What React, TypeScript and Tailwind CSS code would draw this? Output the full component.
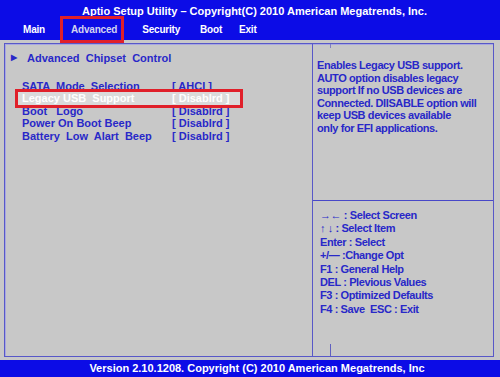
import React from 'react';

const FONT = { fontFamily: '"Liberation Sans", Arial, sans-serif' };

const TABS = [
  { label: 'Main', x: 'ml-[23px]' },
  { label: 'Advanced', x: 'ml-[26px]' },
  { label: 'Security', x: 'ml-[25px]' },
  { label: 'Boot', x: 'ml-[20px]' },
  { label: 'Exit', x: 'ml-[17px]' },
];

const ROWS = [
  { label: 'SATA  Mode  Selection', value: '[ AHCI ]' },
  { label: 'Legacy USB  Support', value: '[ Disablrd ]', active: true },
  { label: 'Boot   Logo', value: '[ Disablrd ]' },
  { label: 'Power On Boot Beep', value: '[ Disablrd ]' },
  { label: 'Battery  Low  Alart  Beep', value: '[ Disablrd ]' },
];

const HELP = [
  '→← : Select Screen',
  '↑ ↓ : Select Item',
  'Enter : Select',
  '+/— :Change Opt',
  'F1 : General Help',
  'DEL : Plevious Values',
  'F3 : Optimized Defaults',
  'F4 : Save  ESC : Exit',
];

export default function App() {
  return (
    <div className="w-[500px] h-[377px] flex flex-col bg-[#c8c8c8] overflow-hidden" style={FONT}>
      {/* header */}
      <div className="relative z-10 h-[40px] shrink-0 bg-[#0c0ce6] text-white font-bold text-[11px] flex flex-col">
        <div className="h-[22px] flex items-center justify-center pl-[9px] leading-none">
          Aptio Setup Utility – Copyright(C) 2010 American Megatrends, Inc.
        </div>
        <div className="flex items-center h-[16px] leading-none text-[10px] tracking-[-0.2px]">
          {TABS.map((t) => (
            <div key={t.label} className={`relative ${t.x} ${t.label === 'Advanced' ? 'text-[#d4d4f0]' : ''}`}>
              {t.label}
              {t.label === 'Advanced' && (
                <span className="absolute left-[-11px] right-[-7px] top-[-9px] bottom-[-8px] border-[3px] border-[#e0202a]" />
              )}
            </div>
          ))}
        </div>
      </div>

      {/* main */}
      <div className="flex-1 pt-[3px] pl-[4px] pr-[6px] pb-[3px] flex">
        <div className="flex-1 flex border border-[#5858c8] shadow-[inset_1px_1px_0_#a8a8e0]">
          {/* left */}
          <div className="w-[308px] shrink-0 border-r border-[#5858c8] text-[#2828c8] font-bold text-[11px] leading-[12.5px]">
            <div className="flex items-center h-[12.5px] mt-[8px] pl-[6px] whitespace-pre">
              <span className="text-[8px] w-[16px] text-[#2828c8]">▶</span>
              <span>Advanced  Chipset  Control</span>
            </div>
            <div className="mt-[15px]">
              {ROWS.map((r) => (
                <div
                  key={r.label}
                  className={
                    r.active
                      ? 'relative flex w-[222px] ml-[13px] pl-[4px] whitespace-pre text-white bg-[#dadada]'
                      : 'flex pl-[17px] whitespace-pre'
                  }
                >
                  <span className="w-[150px] shrink-0">{r.label}</span>
                  <span>{r.value}</span>
                  {r.active && (
                    <span className="absolute left-[-3px] right-[-3px] top-[-3px] bottom-[-3px] border-[3px] border-[#e0202a]" />
                  )}
                </div>
              ))}
            </div>
          </div>

          {/* right */}
          <div className="flex-1 flex flex-col text-[#2828c8] font-bold text-[11px] tracking-[-0.4px]">
            <div className="relative h-[157px] shrink-0 border-b border-[#4848c8] pt-[15px] pl-[4px] leading-[12.6px]">
              <span className="absolute left-[17px] top-0 h-[4px] w-px bg-[#8080c0]" />
              <div>Enables Legacy USB support.</div>
              <div>AUTO option disables legacy</div>
              <div>support If no USB devices are</div>
              <div>Connected. DIISABLE option will</div>
              <div>keep USB devices available</div>
              <div>only for EFI applications.</div>
            </div>
            <div className="relative flex-1 pt-[8px] pl-[7px] leading-[13.4px]">
              {HELP.map((h) => (
                <div key={h} className="whitespace-pre">{h}</div>
              ))}
              <span className="absolute left-[17px] bottom-0 h-[12px] w-px bg-[#6060c0]" />
            </div>
          </div>
        </div>
      </div>

      {/* footer */}
      <div className="h-[17px] shrink-0 bg-[#0c0ce6] text-white font-bold text-[11px] flex items-center justify-center pl-[14px] leading-none">
        Version 2.10.1208. Copyright (C) 2010 American Megatrends, Inc
      </div>
    </div>
  );
}
